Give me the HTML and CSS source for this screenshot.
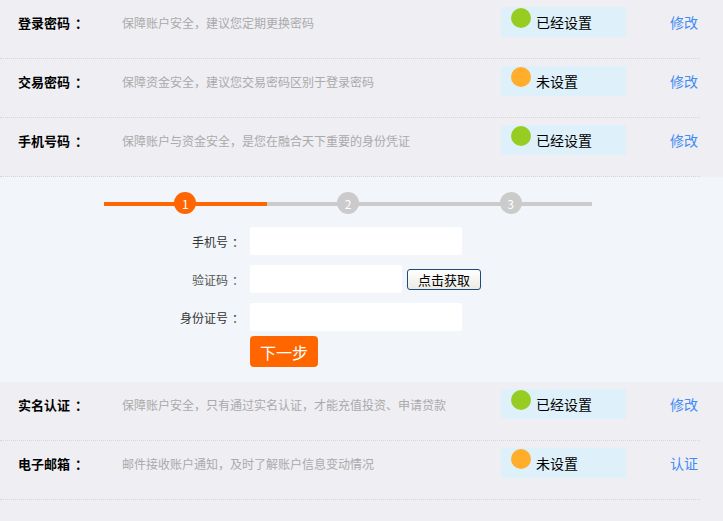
FILE: index.html
```html
<!DOCTYPE html>
<html lang="zh-CN">
<head>
    <meta charset="UTF-8">
    <meta name="viewport" content="width=device-width, initial-scale=1.0">
    <title>安全设置</title>
    <link rel="stylesheet" href="styles.css">
</head>
<body>
    <div class="row">
        <span class="label">登录密码<span class="colon">：</span></span>
        <span class="desc">保障账户安全，建议您定期更换密码</span>
        <span class="status"><i class="dot green"></i>已经设置</span>
        <a class="link" href="#">修改</a>
    </div>
    <div class="row">
        <span class="label">交易密码<span class="colon">：</span></span>
        <span class="desc">保障资金安全，建议您交易密码区别于登录密码</span>
        <span class="status"><i class="dot orange"></i>未设置</span>
        <a class="link" href="#">修改</a>
    </div>
    <div class="row">
        <span class="label">手机号码<span class="colon">：</span></span>
        <span class="desc">保障账户与资金安全，是您在融合天下重要的身份凭证</span>
        <span class="status"><i class="dot green"></i>已经设置</span>
        <a class="link" href="#">修改</a>
    </div>

    <div class="panel">
        <div class="steps">
            <div class="step done"><span class="num">1</span></div>
            <div class="step"><span class="num">2</span></div>
            <div class="step"><span class="num">3</span></div>
        </div>
        <form class="form">
            <div class="field">
                <label for="phone">手机号<span class="colon">：</span></label>
                <input type="text" id="phone" class="input">
            </div>
            <div class="field">
                <label for="code" class="muted">验证码<span class="colon">：</span></label>
                <input type="text" id="code" class="input short">
                <button type="button" class="get-code">点击获取</button>
            </div>
            <div class="field">
                <label for="idcard">身份证号<span class="colon">：</span></label>
                <input type="text" id="idcard" class="input">
            </div>
            <div class="field">
                <span class="spacer"></span>
                <button type="button" class="next">下一步</button>
            </div>
        </form>
    </div>

    <div class="row">
        <span class="label">实名认证<span class="colon">：</span></span>
        <span class="desc">保障账户安全，只有通过实名认证，才能充值投资、申请贷款</span>
        <span class="status"><i class="dot green"></i>已经设置</span>
        <a class="link" href="#">修改</a>
    </div>
    <div class="row">
        <span class="label">电子邮箱<span class="colon">：</span></span>
        <span class="desc">邮件接收账户通知，及时了解账户信息变动情况</span>
        <span class="status"><i class="dot orange"></i>未设置</span>
        <a class="link" href="#">认证</a>
    </div>
</body>
</html>
```

FILE: styles.css
```css
body { margin: 0; background: #efeef3; font-family: "Microsoft YaHei", "Noto Sans CJK SC", "Liberation Sans", sans-serif; color: #000; }

.row { width: 682px; height: 30px; padding: 7px 0 21px 18px; display: flex; align-items: center; border-bottom: 1px dotted #d6d6da; }
.label { width: 104px; font-size: 13px; font-weight: bold; }
.colon { margin-left: 5px; }
.desc { width: 379px; font-size: 12px; color: #aaa; }
.status { width: 115px; height: 30px; padding-left: 10px; display: flex; background: #def1fb; font-size: 14px; line-height: 31px; }
.dot { width: 20px; height: 20px; margin: 1px 5px 0 0; border-radius: 50%; }
.dot.green { background: #97cd23; }
.dot.orange { background: #ffad2b; }
.link { margin-left: 44px; font-size: 14px; color: #3f8cf3; text-decoration: none; }

.panel { background: #f2f5fa; padding: 15px 0 15px; }
.steps { display: flex; width: 488px; margin-left: 104px; }
.step { flex: 1; height: 22px; position: relative; display: flex; justify-content: center; }
.step::before { content: ""; position: absolute; left: 0; right: 0; top: 10px; height: 4px; background: #cbcbcb; }
.step.done::before { background: #ff6600; }
.num { position: relative; width: 22px; height: 22px; border-radius: 50%; background: #cbcbcb; color: #fff; font-size: 12px; line-height: 23px; text-align: center; }
.step.done .num { background: #ff6600; }

.form { margin-top: 13px; }
.field { display: flex; align-items: center; margin-bottom: 10px; }
.field:nth-child(3) { margin-bottom: 5px; }
.field:last-child { margin-bottom: 0; }
.field label, .spacer { width: 238px; padding-right: 12px; text-align: right; font-size: 12px; color: #333; }
.field label .colon { margin-left: 4px; margin-right: -6px; }
.field label.muted { color: #555; }
.input { width: 212px; height: 28px; padding: 0 6px; box-sizing: border-box; border: none; border-radius: 2px; background: #fff; }
.input.short { width: 152px; }
.get-code { width: 74px; height: 21px; margin-left: 5px; padding: 0; border: 1px solid #1f4a7a; border-radius: 3px; background: linear-gradient(#ffffff, #ecebe4); font-family: inherit; font-size: 13px; color: #000; }
.next { width: 68px; height: 31px; border: none; border-radius: 4px; background: #ff6600; color: #fff; font-family: inherit; font-size: 16px; }
```
